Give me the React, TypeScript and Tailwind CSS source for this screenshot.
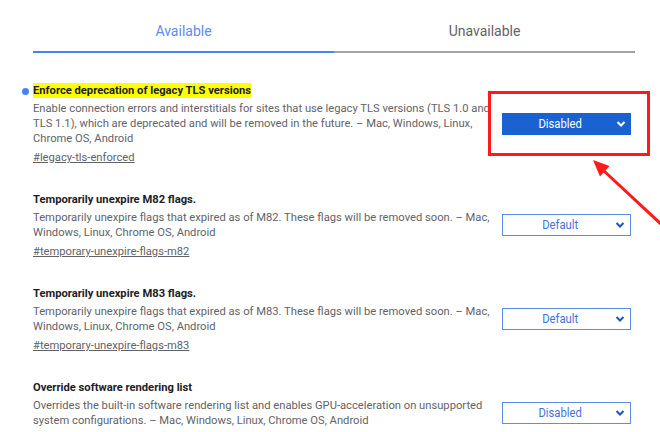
import React from "react";

type Entry = {
  title: string;
  desc: string;
  link: string;
  value: string;
  active?: boolean;
  highlight?: boolean;
};

const entries: Entry[] = [
  {
    title: "Enforce deprecation of legacy TLS versions",
    desc: "Enable connection errors and interstitials for sites that use legacy TLS versions (TLS 1.0 and TLS 1.1), which are deprecated and will be removed in the future. – Mac, Windows, Linux, Chrome OS, Android",
    link: "#legacy-tls-enforced",
    value: "Disabled",
    active: true,
    highlight: true,
  },
  {
    title: "Temporarily unexpire M82 flags.",
    desc: "Temporarily unexpire flags that expired as of M82. These flags will be removed soon. – Mac, Windows, Linux, Chrome OS, Android",
    link: "#temporary-unexpire-flags-m82",
    value: "Default",
  },
  {
    title: "Temporarily unexpire M83 flags.",
    desc: "Temporarily unexpire flags that expired as of M83. These flags will be removed soon. – Mac, Windows, Linux, Chrome OS, Android",
    link: "#temporary-unexpire-flags-m83",
    value: "Default",
  },
  {
    title: "Override software rendering list",
    desc: "Overrides the built-in software rendering list and enables GPU-acceleration on unsupported system configurations. – Mac, Windows, Linux, Chrome OS, Android",
    link: "#ignore-gpu-blocklist",
    value: "Disabled",
  },
];

function Chevron({ color }: { color: string }) {
  return (
    <svg width="10" height="7" viewBox="0 0 10 7" className="absolute right-[5px] top-1/2 -translate-y-1/2">
      <path d="M1.5 1.5 L5 5 L8.5 1.5" fill="none" stroke={color} strokeWidth="2" />
    </svg>
  );
}

function Select({ value, active }: { value: string; active?: boolean }) {
  return (
    <div
      className={
        active
          ? "relative ml-[7px] flex h-[22px] w-[129px] shrink-0 items-center justify-center bg-[#1a62d2] pr-[12px] text-[12px] text-white"
          : "relative ml-[7px] flex h-[22px] w-[129px] shrink-0 items-center justify-center border border-[#5b8ee6] bg-white pr-[12px] text-[12px] text-[#3f73d9]"
      }
    >
      <span className="scale-x-[0.94]">{value}</span>
      <Chevron color={active ? "#ffffff" : "#1a56c4"} />
    </div>
  );
}

export default function App() {
  return (
    <div className="relative h-[432px] w-[660px] overflow-hidden bg-white font-[Roboto,'Liberation_Sans',sans-serif]">
      <div className="pl-[33px] pt-[21px]">
        <div className="flex w-[602px]">
          <div className="w-1/2 border-b-2 border-[#4285f4] pb-[10px] text-center text-[14px] leading-[20px] text-[#5b8def]">
            Available
          </div>
          <div className="w-1/2 border-b-2 border-[#a3a3a3] pb-[10px] text-center text-[14px] leading-[20px] text-[#5f6368]">
            Unavailable
          </div>
        </div>

        <div className="mt-[29px] flex flex-col gap-[26px]">
          {entries.map((e) => (
            <div key={e.link} className="flex items-center">
              <div className="relative w-[462px] shrink-0">
                {e.highlight && (
                  <span className="absolute left-[-11px] top-[6px] h-[7px] w-[7px] rounded-full bg-[#4285f4]" />
                )}
                <div className="text-[11.2px] font-bold leading-[18px] text-[#202124]">
                  <span className={e.highlight ? "bg-[#ffff00] py-[1px]" : ""}>{e.title}</span>
                </div>
                <p className="mt-[1px] text-[11.2px] leading-[15px] text-[#5f6368]">{e.desc}</p>
                <div className="mt-[4px] text-[11.2px] leading-[15px] text-[#5f6368] underline">{e.link}</div>
              </div>
              <Select value={e.value} active={e.active} />
            </div>
          ))}
        </div>
      </div>

      <div className="absolute left-[488px] top-[91px] h-[65px] w-[162px] border-[3px] border-[#ff1a1a]" />

      <svg className="pointer-events-none absolute left-0 top-0" width="660" height="432" viewBox="0 0 660 432">
        <line x1="662" y1="225" x2="604" y2="171" stroke="#ff1a1a" strokeWidth="3" />
        <polygon points="593,160 609.5,166 600,176.5" fill="#ff1a1a" />
      </svg>
    </div>
  );
}
